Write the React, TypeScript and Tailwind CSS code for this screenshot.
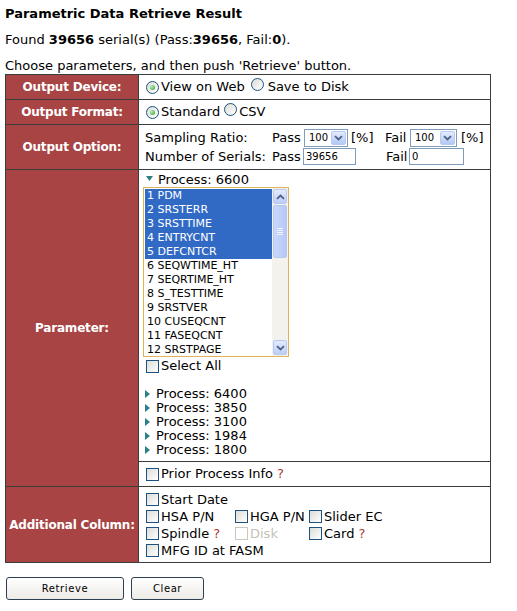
import React from 'react'

const Radio = ({ checked = false }: { checked?: boolean }) => (
  <span className="relative inline-block w-[13px] h-[13px] shrink-0 rounded-full border border-[#1c5180] bg-linear-to-br from-[#dcdcd7] to-white">
    {checked && (
      <span className="absolute left-[3px] top-[3px] w-[5px] h-[5px] rounded-full bg-[radial-gradient(circle_at_35%_35%,#b8f0b0,#21a121)]" />
    )}
  </span>
)

const Check = ({ disabled = false }: { disabled?: boolean }) =>
  disabled ? (
    <span className="inline-block w-[13px] h-[13px] shrink-0 border border-[#cac8bb] bg-white" />
  ) : (
    <span className="inline-block w-[13px] h-[13px] shrink-0 border border-[#1c5180] bg-linear-to-br from-[#dcdcd7] to-white" />
  )

const Chevron = ({ up = false }: { up?: boolean }) => (
  <svg width="9" height="6" viewBox="0 0 9 6" className={up ? 'rotate-180' : ''}>
    <path d="M1 1.2 L4.5 4.5 L8 1.2" fill="none" stroke="#4d6185" strokeWidth="1.8" />
  </svg>
)

const Select = ({ w }: { w: string }) => (
  <span className={`inline-flex items-center h-[18px] border border-[#7f9db9] bg-white ${w}`}>
    <span className="flex-1 pl-[4px] text-[10px] leading-none">100</span>
    <span className="flex items-center justify-center w-[15px] h-[14px] mr-px rounded-[2px] border border-[#b7c9f3] bg-linear-to-b from-[#e3ebfe] to-[#b4c8f6]">
      <Chevron />
    </span>
  </span>
)

const Tri = ({ down = false }: { down?: boolean }) =>
  down ? (
    <svg width="7" height="5" viewBox="0 0 7 5" className="mr-[5px] mt-[-3px]">
      <path d="M0 0 L7 0 L3.5 5 Z" fill="#2c7f86" />
    </svg>
  ) : (
    <svg width="5" height="8" viewBox="0 0 5 8" className="mr-[6px]">
      <path d="M0 0 L5 4 L0 8 Z" fill="#2c7f86" />
    </svg>
  )

const items = [
  '1 PDM', '2 SRSTERR', '3 SRSTTIME', '4 ENTRYCNT', '5 DEFCNTCR', '6 SEQWTIME_HT',
  '7 SEQRTIME_HT', '8 S_TESTTIME', '9 SRSTVER', '10 CUSEQCNT', '11 FASEQCNT', '12 SRSTPAGE',
]

const Head = ({ children, className = '' }: { children: React.ReactNode; className?: string }) => (
  <div className={`bg-[#a84444] text-white font-bold text-[12px] tracking-[-0.2px] whitespace-nowrap flex items-center justify-center ${className}`}>
    {children}
  </div>
)

const Q = () => <span className="text-[#a83a3a] ml-[4px]">?</span>

export default function App() {
  return (
    <div className="w-[517px] h-[611px] bg-white text-black pl-[5px] pt-[6px] text-[13px] font-['DejaVu_Sans',Verdana,sans-serif]">
      <h1 className="font-bold leading-[16px] mb-[10px]">Parametric Data Retrieve Result</h1>
      <p className="leading-[16px] mb-[10px]">
        Found <b>39656</b> serial(s) (Pass:<b>39656</b>, Fail:<b>0</b>).
      </p>
      <p className="leading-[16px]">Choose parameters, and then push 'Retrieve' button.</p>

      <div className="grid w-[486px] grid-cols-[132px_351px] grid-rows-[24px_24px_44px_291px_24px_75px] gap-px border border-[#3c3c3c] bg-[#3c3c3c]">
        <Head>Output Device:</Head>
        <div className="bg-white flex items-center pl-[7px]">
          <Radio checked />
          <span className="ml-[2px]">View on Web</span>
          <span className="ml-[6px]"><Radio /></span>
          <span className="ml-[4px]">Save to Disk</span>
        </div>

        <Head>Output Format:</Head>
        <div className="bg-white flex items-center pl-[7px]">
          <Radio checked />
          <span className="ml-[2px]">Standard</span>
          <span className="ml-[4px]"><Radio /></span>
          <span className="ml-[2px]">CSV</span>
        </div>

        <Head>Output Option:</Head>
        <div className="bg-white pl-[6px] pt-[3px] grid grid-cols-[127px_32px_47px_34px_25px_51px_1fr] grid-rows-[19px_19px] items-center">
          <span>Sampling Ratio:</span>
          <span>Pass</span>
          <Select w="w-[44px]" />
          <span>[%]</span>
          <span>Fail</span>
          <Select w="w-[47px]" />
          <span>[%]</span>

          <span>Number of Serials:</span>
          <span>Pass</span>
          <span className="col-span-2 inline-flex items-center h-[17px] w-[53px] -ml-px border border-[#7f9db9] bg-white pl-[2px] text-[10px]">39656</span>
          <span className="pl-px">Fail</span>
          <span className="col-span-2 inline-flex items-center h-[17px] w-[55px] -ml-px border border-[#7f9db9] bg-white pl-[2px] text-[10px]">0</span>
        </div>

        <Head className="row-span-2">Parameter:</Head>
        <div className="bg-white pl-[4px] pt-[3px]">
          <div className="flex items-center h-[14px] leading-[14px] pl-[3px]">
            <Tri down />
            <span>Process: 6600</span>
          </div>
          <div className="flex w-[146px] h-[170px] border border-[#dcb25a] bg-white">
            <div className="flex-1 pl-px pt-px">
              {items.map((t, i) => (
                <div
                  key={t}
                  className={`h-[14px] leading-[14px] pl-[2px] text-[11px] ${i < 5 ? 'bg-[#316ac5] text-white' : 'text-black'}`}
                >
                  {t}
                </div>
              ))}
            </div>
            <div className="w-[16px] flex flex-col bg-[#f4f2ec] p-px">
              <div className="h-[15px] flex items-center justify-center rounded-[2px] border border-[#b7c9f3] bg-linear-to-b from-[#e3ebfe] to-[#bccdf7]">
                <Chevron up />
              </div>
              <div className="mt-px h-[53px] flex flex-col items-center justify-center gap-px rounded-[2px] border border-[#b7c9f3] bg-linear-to-r from-[#c9d8fc] to-[#b5c8f6]">
                <span className="w-[6px] h-px bg-[#eef3fe]" />
                <span className="w-[6px] h-px bg-[#eef3fe]" />
                <span className="w-[6px] h-px bg-[#eef3fe]" />
                <span className="w-[6px] h-px bg-[#eef3fe]" />
              </div>
              <div className="flex-1" />
              <div className="h-[15px] flex items-center justify-center rounded-[2px] border border-[#b7c9f3] bg-linear-to-b from-[#e3ebfe] to-[#bccdf7]">
                <Chevron />
              </div>
            </div>
          </div>
          <div className="flex items-center h-[18px] pl-[3px]">
            <Check />
            <span className="ml-[2px]">Select All</span>
          </div>
          <div className="mt-[12px] pl-[2px]">
            {['6400', '3850', '3100', '1984', '1800'].map(p => (
              <div key={p} className="flex items-center h-[14px] leading-[14px]">
                <Tri />
                <span>Process: {p}</span>
              </div>
            ))}
          </div>
        </div>

        <div className="bg-white flex items-center pl-[7px]">
          <Check />
          <span className="ml-[2px]">Prior Process Info</span>
          <Q />
        </div>

        <Head>Additional Column:</Head>
        <div className="bg-white pl-[7px] pt-[4px] grid grid-cols-[89px_74px_1fr] auto-rows-[17px] items-center">
          <div className="col-span-3 flex items-center">
            <Check />
            <span className="ml-[2px]">Start Date</span>
          </div>
          <div className="flex items-center">
            <Check />
            <span className="ml-[2px]">HSA P/N</span>
          </div>
          <div className="flex items-center">
            <Check />
            <span className="ml-[2px]">HGA P/N</span>
          </div>
          <div className="flex items-center">
            <Check />
            <span className="ml-[2px]">Slider EC</span>
          </div>
          <div className="flex items-center">
            <Check />
            <span className="ml-[2px]">Spindle</span>
            <Q />
          </div>
          <div className="flex items-center">
            <Check disabled />
            <span className="ml-[2px] text-[#c4c2b8]">Disk</span>
          </div>
          <div className="flex items-center">
            <Check />
            <span className="ml-[2px]">Card</span>
            <Q />
          </div>
          <div className="col-span-3 flex items-center">
            <Check />
            <span className="ml-[2px]">MFG ID at FASM</span>
          </div>
        </div>
      </div>

      <div className="flex gap-[7px] mt-[14px] ml-px">
        <button className="w-[118px] h-[23px] rounded-[3px] border border-[#2e3f52] bg-linear-to-b from-white to-[#ecebe6] text-[10px] tracking-[0.6px]">
          Retrieve
        </button>
        <button className="w-[73px] h-[23px] rounded-[3px] border border-[#2e3f52] bg-linear-to-b from-white to-[#ecebe6] text-[10px] tracking-[0.6px]">
          Clear
        </button>
      </div>
    </div>
  )
}
